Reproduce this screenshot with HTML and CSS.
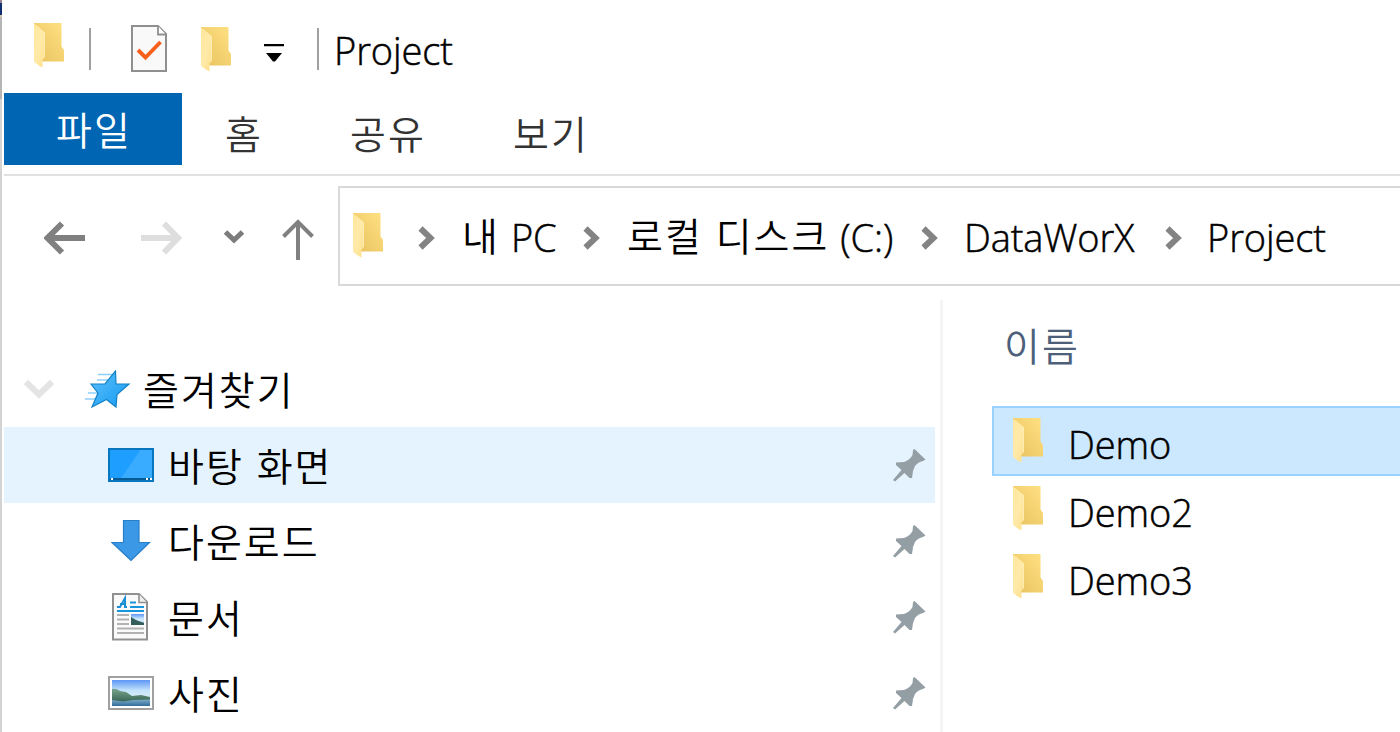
FILE: index.html
```html
<!DOCTYPE html>
<html lang="ko">
<head>
<meta charset="utf-8">
<title>Project</title>
<link rel="stylesheet" href="styles.css">
</head>
<body>
<svg class="defs" width="0" height="0">
  <defs>
    <linearGradient id="gBack" x1="1" y1="0" x2="0" y2="1"><stop offset="0" stop-color="#ffe183"/><stop offset="1" stop-color="#e8c15e"/></linearGradient>
    <linearGradient id="gFlap" x1="0" y1="0" x2="1" y2="1"><stop offset="0" stop-color="#ffe79c"/><stop offset=".5" stop-color="#ffeaa9"/><stop offset="1" stop-color="#ffdf88"/></linearGradient>
    <linearGradient id="gStar" x1="0" y1="0" x2="1" y2="1"><stop offset="0" stop-color="#5ec0fb"/><stop offset="1" stop-color="#159bf2"/></linearGradient>
    <linearGradient id="gSky" x1="0" y1="0" x2="0" y2="1"><stop offset="0" stop-color="#5c97f5"/><stop offset=".4" stop-color="#c3e2fb"/><stop offset=".65" stop-color="#d9eefa"/><stop offset="1" stop-color="#376f9c"/></linearGradient>
    <linearGradient id="gLake" x1="0" y1="0" x2="0" y2="1"><stop offset="0" stop-color="#8db9d3"/><stop offset="1" stop-color="#326c98"/></linearGradient>
    <linearGradient id="gHill" x1="0" y1="0" x2="0" y2="1"><stop offset="0" stop-color="#79a48b"/><stop offset="1" stop-color="#3b6657"/></linearGradient>
    <symbol id="folder" viewBox="0 0 30 45">
      <path d="M0 0H27.5V23.5L30 27V38.5H8V20L0 1Z" fill="url(#gBack)"/>
      <path d="M0 1L3 2.5L10 8.5Q10.700 9 10.700 10V33L8.500 36V44.500L5.500 43L0 39Z" fill="url(#gFlap)"/>
      <path d="M10.500 9V34L8.500 36" fill="none" stroke="#fff0bd" stroke-width=".8"/>
    </symbol>
    <symbol id="chev" viewBox="0 0 17 24">
      <path d="M2.500 2.500L12.500 12L2.500 21.500" fill="none" stroke="#838383" stroke-width="6"/>
    </symbol>
    <symbol id="pin" viewBox="0 0 34 34">
      <path d="M22.500 1L33.500 11.500L31 13Q26 14 23 18L21 23L20 30H17.500L12.500 25L3 33.500L1 32L9.500 22L4 17V14.500L12 14Q18 12 20.500 7L21 2Z" fill="#949fa5"/>
    </symbol>
  </defs>
</svg>
<div class="window">
  <div class="frame"><i class="frame-navy"></i><i class="frame-gray"></i></div>
  <header class="titlebar">
    <svg class="folder tb-app"><use href="#folder"/></svg>
    <i class="sep tb-sep1"></i>
    <svg class="tb-check" viewBox="0 0 36 47"><path d="M1 1H27L35 9V46H1Z" fill="#f9f9f9" stroke="#8f8f8f" stroke-width="2"/><path d="M27 1V9.500H35" fill="#fff" stroke="#8f8f8f" stroke-width="1.800"/><path d="M7 25L14.500 32.500L29.500 17" fill="none" stroke="#f7601b" stroke-width="3.900"/></svg>
    <svg class="folder tb-new"><use href="#folder"/></svg>
    <svg class="tb-menu" viewBox="0 0 20 20"><path d="M0 1H20V3.200H0ZM2 10H18L11 18.500H9Z" fill="#000"/></svg>
    <i class="sep tb-sep2"></i>
    <span class="en tb-title">Project</span>
  </header>
  <nav class="tabs">
    <a class="tab tab-file">파일</a><a class="tab tab-home">홈</a><a class="tab tab-share">공유</a><a class="tab tab-view">보기</a>
  </nav>
  <div class="address">
    <svg class="arrow back" viewBox="0 0 42 34"><path d="M41 17H5M18 2.500L3.500 17L18 31.500" fill="none" stroke="#808080" stroke-width="6"/></svg>
    <svg class="arrow fwd" viewBox="0 0 42 34"><path d="M0 17H36M23 2.500L37 17L23 31.500" fill="none" stroke="#dedede" stroke-width="6"/></svg>
    <svg class="recent" viewBox="0 0 20 14"><path d="M1.500 2L10 10L18.500 2" fill="none" stroke="#7c7c7c" stroke-width="5"/></svg>
    <svg class="up" viewBox="0 0 32 41"><path d="M16 41V3M1.500 17.500L16 3L30.500 17.500" fill="none" stroke="#808080" stroke-width="4"/></svg>
    <div class="path">
      <svg class="folder"><use href="#folder"/></svg>
      <svg class="chev c1"><use href="#chev"/></svg>
      <span class="crumb pc"><b class="ko">내</b><b class="en">PC</b></span>
      <svg class="chev"><use href="#chev"/></svg>
      <span class="crumb disk"><b class="ko">로컬 디스크</b><b class="en">(C:)</b></span>
      <svg class="chev"><use href="#chev"/></svg>
      <span class="crumb worx"><b class="en">DataWorX</b></span>
      <svg class="chev"><use href="#chev"/></svg>
      <span class="crumb last"><b class="en">Project</b></span>
    </div>
  </div>
  <main class="body">
    <aside class="tree">
      <div class="node root">
        <svg class="expander" viewBox="0 0 30 20"><path d="M2 3L15 15.500L28 3" fill="none" stroke="#e4e4e4" stroke-width="6"/></svg>
        <svg class="star" viewBox="0 0 48 40"><path d="M15 4.500H30M14 10H26M5 23H18M2 29H16" stroke="#8fd0fa" stroke-width="1.400"/><path d="M32.500 1L33 14H46L34 24.500L33 37L23.500 29.500L9 37L15 23L8 14H22Z" fill="url(#gStar)" stroke="#1282c6" stroke-width="1.200"/></svg>
        <span class="ko">즐겨찾기</span>
      </div>
      <div class="node hot">
        <svg class="ico" viewBox="0 0 46 46"><path d="M1 7H45V39H1Z" fill="#1e9fff"/><path d="M33 7H45V38H12Z" fill="#44b0ff" opacity=".75"/><path d="M1 7H45V39H1Z" fill="none" stroke="#0876bd" stroke-width="2"/><path d="M2 37H44" stroke="#075b94" stroke-width="2"/><path d="M3 37H5M38 37H40M42 37H44" stroke="#fff" stroke-width="2"/></svg>
        <span class="ko">바탕 화면</span><svg class="pin"><use href="#pin"/></svg>
      </div>
      <div class="node">
        <svg class="ico" viewBox="0 0 46 46"><path d="M15.500 2.500H31V24.500H41.500L23 42.500L4 24.500H15.500Z" fill="#3a98e7" stroke="#287fc8" stroke-width="1.200"/></svg>
        <span class="ko">다운로드</span><svg class="pin"><use href="#pin"/></svg>
      </div>
      <div class="node">
        <svg class="ico doc" viewBox="0 0 46 48"><path d="M5 1H31L39 9V46.500H5Z" fill="#fafafa" stroke="#919191" stroke-width="2"/><path d="M31 1V9.500H39" fill="#eee" stroke="#919191" stroke-width="1.600"/><path d="M9 14H12L17 5V14H19M12 11H17" fill="none" stroke="#1c8fd4" stroke-width="2"/><path d="M22 9.500H28M22 14H36M9 18H36" stroke="#1696db" stroke-width="2"/><path d="M9 22H21M9 26.500H21M9 31H21M9 35.500H36M9 40H36" stroke="#b2b2b2" stroke-width="2"/><path d="M23 21H36V32H23Z" fill="url(#gSky)"/><path d="M23 24L28 27L36 30V32H23Z" fill="#345d5c"/></svg>
        <span class="ko">문서</span><svg class="pin"><use href="#pin"/></svg>
      </div>
      <div class="node">
        <svg class="ico" viewBox="0 0 46 46"><path d="M1 7H45V39H1Z" fill="#fff" stroke="#a0a0a0" stroke-width="2"/><path d="M4 10H42V36H4Z" fill="url(#gSky)"/><path d="M4 28H42V36H4Z" fill="url(#gLake)"/><path d="M4 19Q8 18 12 21L18 22L24 26L33 25L42 27V29.500L25 30L15 31.500L4 30Z" fill="url(#gHill)"/></svg>
        <span class="ko">사진</span><svg class="pin"><use href="#pin"/></svg>
      </div>
    </aside>
    <section class="files">
      <div class="col-head ko">이름</div>
      <div class="file selected"><svg class="folder"><use href="#folder"/></svg><span class="en">Demo</span></div>
      <div class="file"><svg class="folder"><use href="#folder"/></svg><span class="en">Demo2</span></div>
      <div class="file"><svg class="folder"><use href="#folder"/></svg><span class="en">Demo3</span></div>
    </section>
  </main>
</div>
</body>
</html>
```
FILE: styles.css
```css
* { box-sizing: border-box; }
body { margin: 0; background: #fff; overflow: hidden; color: #000; }
.defs { position: absolute; }
svg { display: block; flex: none; }
b, i { font-weight: inherit; font-style: normal; }
.window { position: relative; width: 1400px; height: 732px; overflow: hidden; display: flex; flex-direction: column; }
.frame { position: absolute; left: 0; top: 0; width: 2px; height: 732px; background: #d3d3d3; display: flex; flex-direction: column; }
.frame-navy { height: 17px; background: #0f2f70; border-top: 3px solid #9b8394; border-bottom: 2px solid #d8c3a8; }
.frame-gray { height: 82px; background: #b5b5b5; }
.ko, .tab { font-family: "Noto Sans CJK KR", sans-serif; font-weight: 350; font-size: 39px; letter-spacing: 2px; line-height: 56px; white-space: pre; }
.en { font-family: "Open Sans", "Noto Sans", sans-serif; font-size: 38px; letter-spacing: -0.1px; line-height: 52px; font-weight: 350; -webkit-text-stroke: 0.5px currentColor; white-space: pre; }
.folder { width: 30px; height: 45px; }

.titlebar { height: 93px; display: flex; align-items: flex-start; padding-left: 34px; }
.sep { width: 2px; height: 42px; margin-top: 28px; background: #a0a0a0; flex: none; }
.tb-app { margin-top: 23px; }
.tb-sep1 { margin-left: 25px; }
.tb-check { width: 36px; height: 47px; margin: 25px 0 0 40px; }
.tb-new { margin: 27px 0 0 34px; }
.tb-menu { width: 20px; height: 20px; margin: 43px 0 0 33px; }
.tb-sep2 { margin-left: 33px; }
.tb-title { margin: 24px 0 0 15px; }

.tabs { height: 83px; display: flex; border-bottom: 2px solid #e1e1e1; margin-left: 4px; flex: none; }
.tab { color: #333; padding-top: 11px; height: 72px; }
.tab-file { width: 178px; background: #0065b3; color: #fff; padding: 7px 0 0 52px; }
.tab-home { margin-left: 43px; width: 125px; }
.tab-share { width: 163px; }

.address { height: 124px; flex: none; display: flex; align-items: flex-start; padding: 10px 0 0 44px; }
.arrow { width: 42px; height: 34px; margin-top: 35px; }
.fwd { margin-left: 55px; }
.recent { width: 20px; height: 14px; margin: 44px 0 0 41px; }
.up { width: 32px; height: 41px; margin: 33px 0 0 38px; }
.path { margin-left: 24px; flex: 1; height: 100px; border: 2px solid #d9d9d9; border-right: 0; display: flex; align-items: flex-start; padding-left: 13px; }
.path .folder { margin-top: 25px; }
.chev { width: 17px; height: 24px; margin-top: 38px; }
.c1 { margin-left: 35px; }
.crumb { display: flex; padding-left: 27px; }
.crumb .ko { padding-top: 18px; }
.crumb .en { padding-top: 23px; }
.pc { width: 148px; }
.pc .en { margin-left: 11px; }
.disk { width: 321px; }
.disk .en { margin-left: 11px; }
.worx { width: 227px; padding-left: 26px; }
.last { padding-left: 25px; }

.body { display: flex; flex: 1; }
.tree { width: 940px; padding: 51px 5px 0 4px; flex: none; }
.node { height: 76px; display: flex; align-items: center; padding: 0 9px 0 104px; }
.node.root { padding-left: 20px; }
.node .ko { margin: -2px 0 0 14px; }
.root .ko { margin: -2px 0 0 12px; }
.hot { background: #e5f3ff; }
.expander { width: 30px; height: 20px; }
.star { width: 48px; height: 40px; margin: 2px 0 0 29px; }
.ico { width: 46px; height: 46px; }
.ico.doc { height: 48px; }
.pin { width: 34px; height: 34px; margin-left: auto; }
.files { flex: 1; border-left: 3px solid #f5f5f5; padding-left: 49px; }
.col-head { height: 106px; padding: 16px 0 0 12px; color: #4c607a; }
.file { height: 68px; display: flex; align-items: flex-start; padding-left: 21px; }
.file .folder { margin-top: 12px; }
.file .en { margin: 12px 0 0 25px; }
.selected { height: 70px; margin-bottom: -2px; background: #cce8ff; border: 2px solid #99d1ff; border-right: 0; padding-left: 19px; }
.selected .folder { margin-top: 10px; }
.selected .en { margin-top: 10px; }
```
